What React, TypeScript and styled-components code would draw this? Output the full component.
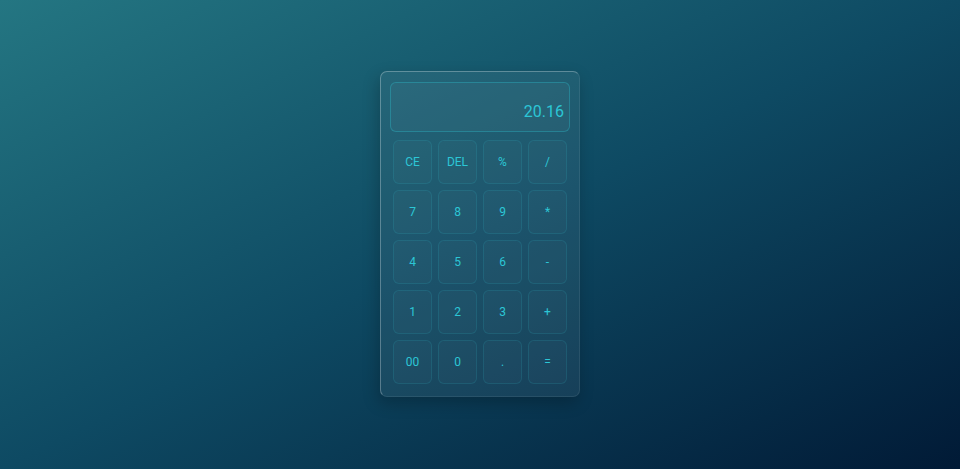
import React, { useState } from 'react';
import styled, { createGlobalStyle } from 'styled-components';

const GlobalStyle = createGlobalStyle`
  html, body {
    margin: 0;
    padding: 0;
    height: 100%;
  }
  #root {
    height: 100%;
  }
`;

const Page = styled.div`
  width: 100%;
  height: 100vh;
  display: flex;
  justify-content: center;
  align-items: flex-start;
  padding-top: 71px;
  box-sizing: border-box;
  background: linear-gradient(to bottom right, #247682, #0e4a63 50%, #011a36);
  font-family: Roboto, "Liberation Sans", sans-serif;
`;

const Calculator = styled.div`
  width: 200px;
  box-sizing: border-box;
  padding: 9px;
  border-radius: 7px;
  background: rgba(255, 255, 255, 0.06);
  border: 1px solid rgba(255, 255, 255, 0.08);
  border-top-color: rgba(255, 255, 255, 0.28);
  border-left-color: rgba(255, 255, 255, 0.28);
  box-shadow: -2px 6px 16px rgba(0, 0, 0, 0.22);
`;

const Display = styled.div`
  height: 50px;
  box-sizing: border-box;
  border-radius: 6px;
  border: 1px solid rgba(40, 200, 215, 0.32);
  background: rgba(255, 255, 255, 0.03);
  display: flex;
  align-items: flex-end;
  justify-content: flex-end;
  padding: 0 5px 10px 10px;
  margin-top: 1px;
  margin-bottom: 5px;
  color: #2cc6d6;
  font-size: 16px;
`;

const Keys = styled.div`
  display: grid;
  grid-template-columns: repeat(4, 45px);
  grid-auto-rows: 50px;
`;

const Key = styled.button`
  margin: 3px;
  border-radius: 6px;
  border: 1px solid rgba(40, 200, 215, 0.14);
  background: rgba(255, 255, 255, 0.02);
  color: #2cc6d6;
  font-family: Roboto, "Liberation Sans", sans-serif;
  font-size: 12px;
  cursor: pointer;
  padding: 0;
`;

const keys = [
  'CE', 'DEL', '%', '/',
  '7', '8', '9', '*',
  '4', '5', '6', '-',
  '1', '2', '3', '+',
  '00', '0', '.', '=',
];

export default function App() {
  const [value, setValue] = useState('20.16');

  function press(k: string) {
    if (k === 'CE') {
      setValue('');
    } else if (k === 'DEL') {
      setValue(value.slice(0, -1));
    } else if (k === '=') {
      try {
        // eslint-disable-next-line no-new-func
        setValue(String(Function('return ' + value)()));
      } catch (err) {
        setValue('Error');
      }
    } else {
      setValue(value + k);
    }
  }

  return (
    <Page>
      <GlobalStyle />
      <Calculator>
        <Display>{value}</Display>
        <Keys>
          {keys.map(k => (
            <Key key={k} onClick={() => press(k)}>
              {k}
            </Key>
          ))}
        </Keys>
      </Calculator>
    </Page>
  );
}
